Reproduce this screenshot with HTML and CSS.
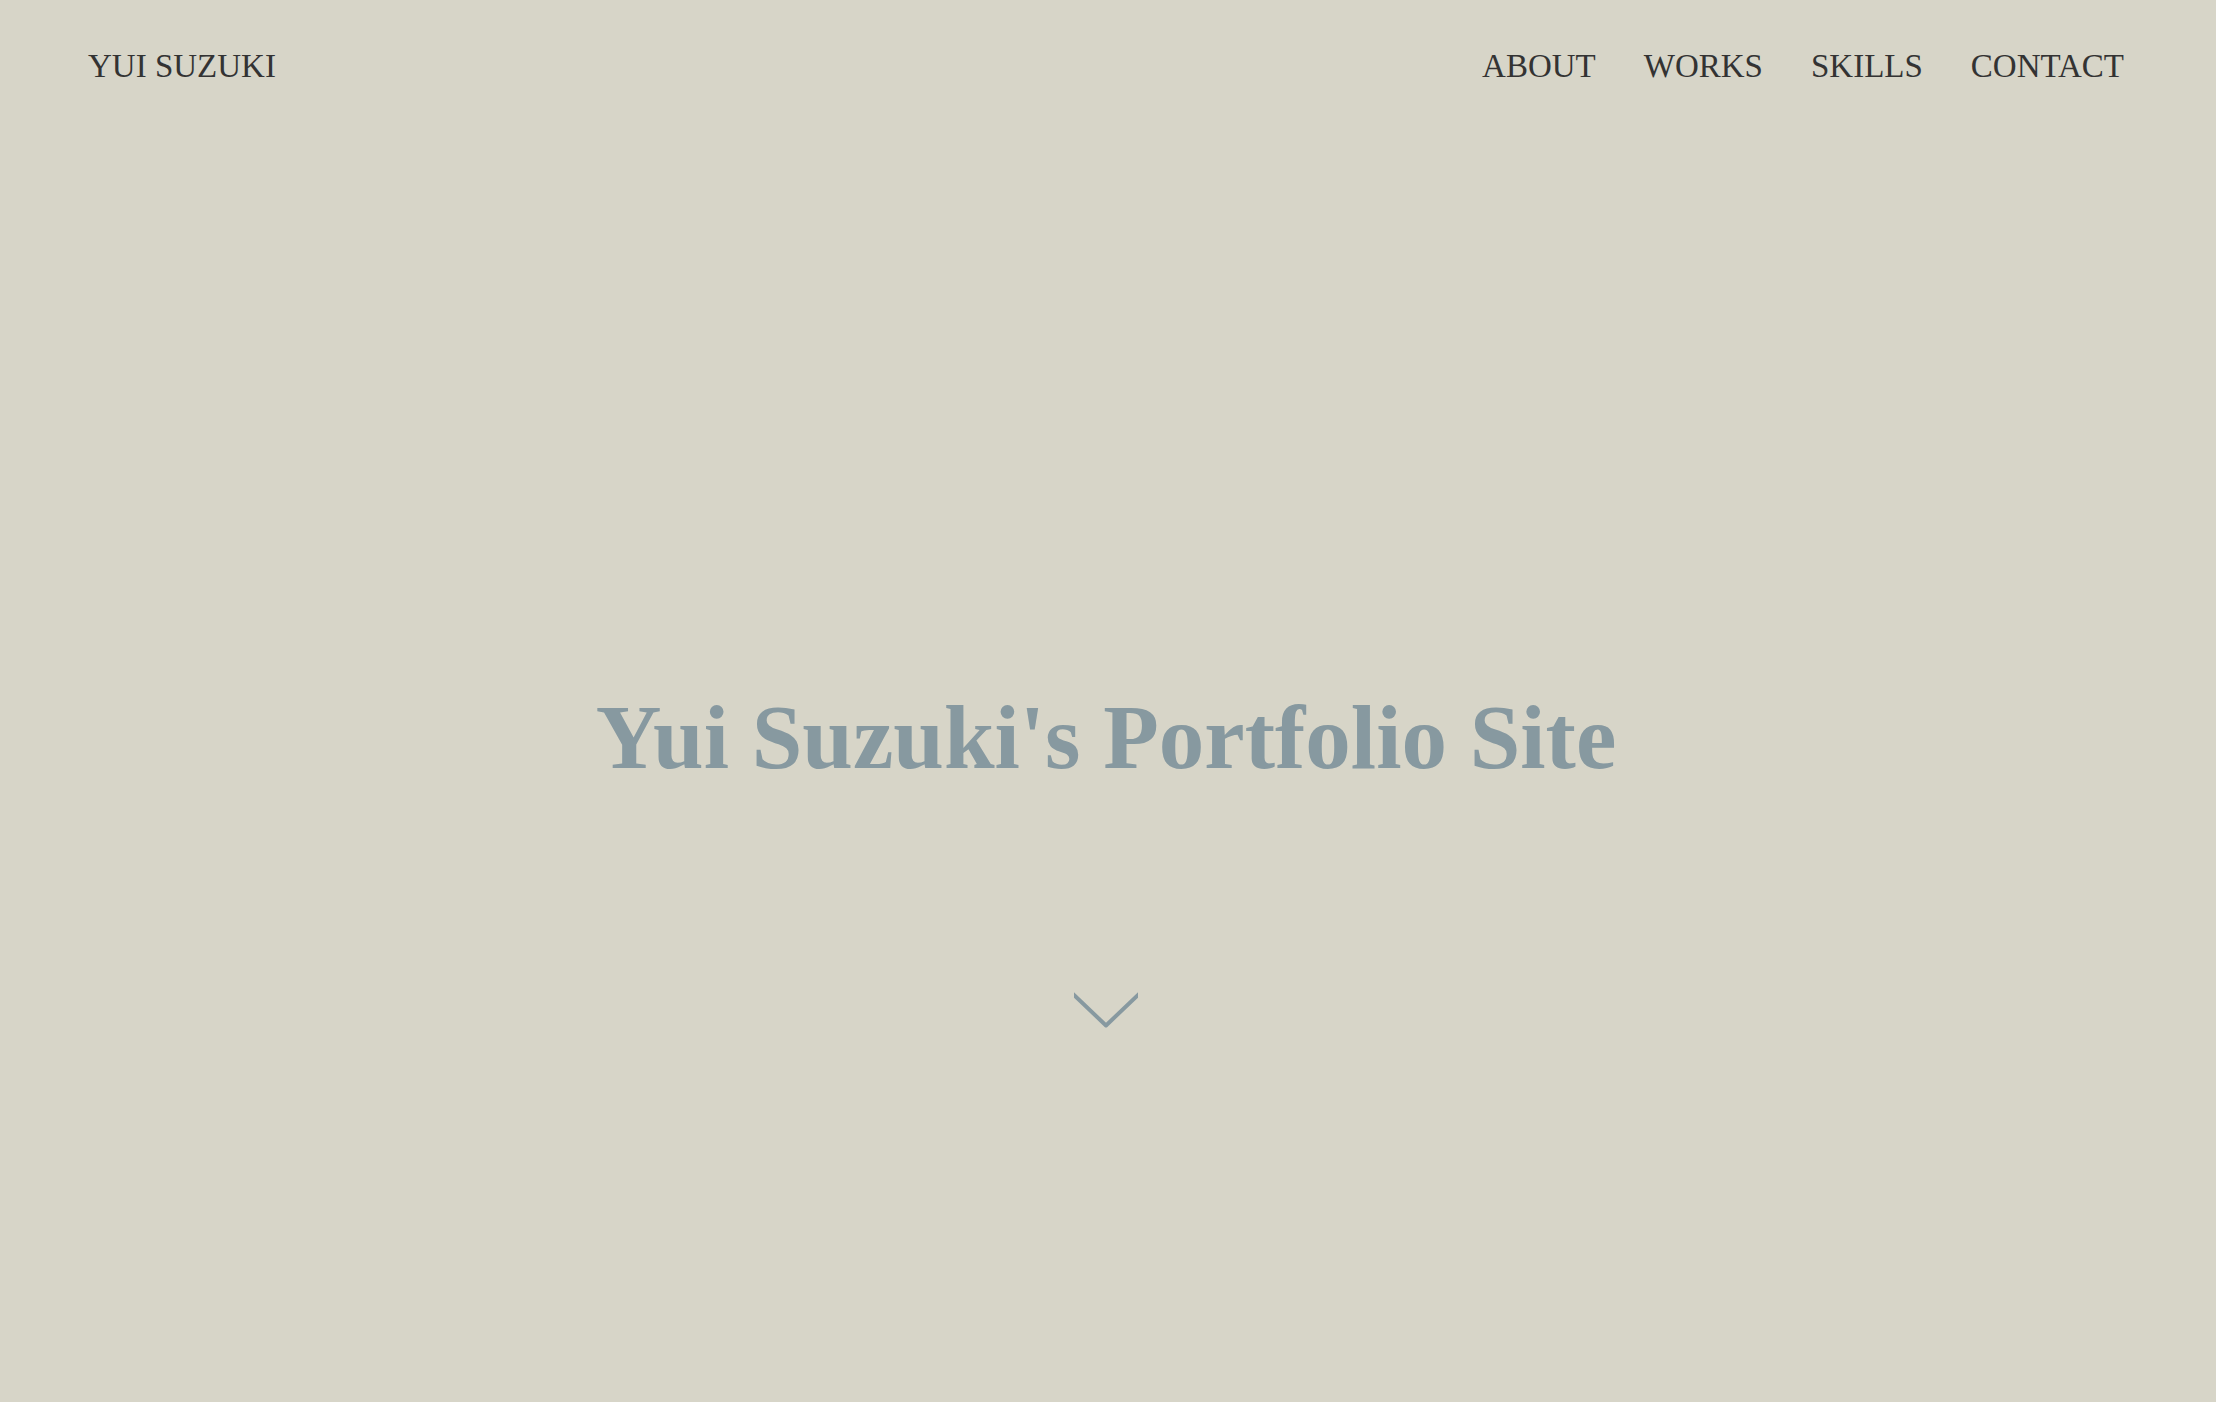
FILE: index.html
```
<!DOCTYPE html>
<html lang="ja">
<head>
    <meta charset="UTF-8">
    <meta name="viewport" content="width=device-width, initial-scale=1.0">
    <title>Yui Suzuki's Portfolio Site</title>
    <link rel="stylesheet" href="styles.css">
</head>
<body>
    <header class="header">
        <a class="header-logo" href="#top">YUI SUZUKI</a>
        <nav>
            <ul class="header-nav">
                <li><a href="#about">ABOUT</a></li>
                <li><a href="#works">WORKS</a></li>
                <li><a href="#skills">SKILLS</a></li>
                <li><a href="#contact">CONTACT</a></li>
            </ul>
        </nav>
    </header>

    <main class="mainvisual" id="top">
        <h1 class="title">Yui Suzuki's Portfolio Site</h1>
        <a class="scroll" href="#about" aria-label="Scroll down">
            <svg width="64" height="36" viewBox="0 0 64 36" fill="none">
                <path d="M-2 1L32 33.5L66 1" stroke="#8799a0" stroke-width="4" stroke-linejoin="round"/>
            </svg>
        </a>
    </main>
</body>
</html>
```
FILE: styles.css
```
body {
    display: flex;
    flex-direction: column;
    min-height: 100vh;
    margin: 0;
    background-color: #d7d5c8;
    color: #333333;
    font-family: "Liberation Serif", serif;
}
a {
    color: inherit;
    text-decoration: none;
}
.header {
    display: flex;
    align-items: center;
    justify-content: space-between;
    padding: 44px 92px 44px 88px;
    font-size: 33px;
    line-height: 44px;
}
.header-nav {
    display: flex;
    gap: 48px;
    margin: 0;
    padding: 0;
    list-style: none;
}
.mainvisual {
    display: flex;
    flex: 1;
    flex-direction: column;
    align-items: center;
    padding: 540px 4px 0 0;
    color: #8799a0;
}
.title {
    margin: 0;
    font-size: 91px;
    line-height: 132px;
}
.scroll {
    margin-top: 188px;
}
.scroll svg {
    display: block;
}
```
